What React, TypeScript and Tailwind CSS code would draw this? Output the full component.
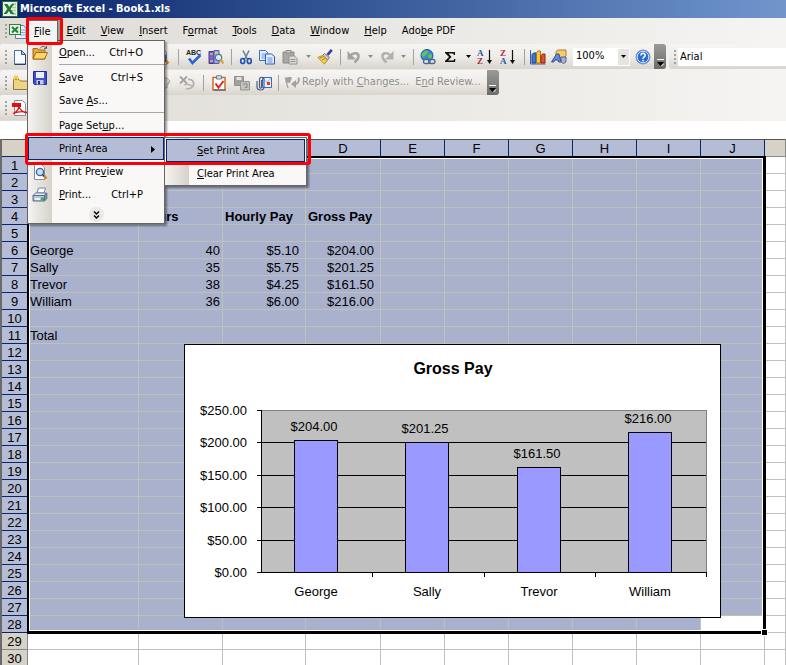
import React from 'react';

const UI = "font-['DejaVu_Sans_Condensed','DejaVu_Sans',sans-serif] text-[11px]";

type Kids = { children?: React.ReactNode };

function Svg({ children, w = 16 }: Kids & { w?: number }) {
  return (
    <svg width={w} height={16} viewBox={`0 0 ${w} 16`} fill="none" aria-hidden="true" className="shrink-0">
      {children}
    </svg>
  );
}

const ExcelIcon = () => (
  <Svg>
    <rect x=".5" y=".5" width="15" height="15" fill="#e8f3e4" stroke="#2f6b38" />
    <rect x="10" y="2" width="4" height="12" fill="#a9cfa4" />
    <path d="M10 5h4M10 8h4M10 11h4" stroke="#fff" />
    <path d="M2 3h3.500l1.800 3L9.500 3H12L8.600 8l3.600 5H8.700L6.900 10 4.800 13H1.600l3.700-5z" fill="#1f7a33" />
  </Svg>
);
const WorkbookIcon = () => (
  <Svg w={18}>
    <path d="M6.500 2.500h8l2.500 3v10H6.500z" fill="#eaf1fb" stroke="#5a7fb8" />
    <path d="M11 7h5M11 9.500h5M11 12h5" stroke="#86a8d8" />
    <rect x=".5" y="1.500" width="11" height="10" fill="#e4f2df" stroke="#3c7a40" />
    <path d="m3 4 6 5.500M9 4 3 9.500" stroke="#23803a" strokeWidth="2" />
  </Svg>
);
const NewIcon = () => (
  <Svg>
    <path d="M2.500 1.500h7l4 4v9.500h-11z" fill="#f7fbff" stroke="#4a6ea5" />
    <path d="M9.500 1.500v4h4z" fill="#b9cdea" stroke="#35568c" />
    <path d="M13.500 6v9.500h-11" stroke="#27406e" />
  </Svg>
);
const OpenIcon = () => (
  <Svg>
    <path d="M1 14V3.500h4.500L7 5h6v9z" fill="#e7a93c" stroke="#a36b12" />
    <path d="M1 14 4 7.500h11.500L12.500 14z" fill="#ffd66e" stroke="#a36b12" />
    <path d="M8 3.500C9.500.8 12.500.8 14 3M14.500.8V3.500H12" stroke="#5b5b5b" />
  </Svg>
);
const SaveIcon = () => (
  <Svg>
    <path d="M1.500 1.500h13v13h-12l-1-1z" fill="#3f4fc4" stroke="#232f8e" />
    <rect x="4" y="2" width="8" height="6" fill="#e9eefb" />
    <rect x="4.500" y="10" width="7" height="4.500" fill="#c3cbe8" />
    <rect x="6" y="11" width="2" height="3.500" fill="#232f8e" />
  </Svg>
);
const PreviewIcon = () => (
  <Svg>
    <path d="M2.500.5h7l3 3v12h-10z" fill="#fff" stroke="#7b8fb3" />
    <circle cx="8" cy="8" r="3.600" fill="#bfe0f5" stroke="#46618f" strokeWidth="1.300" />
    <path d="m11 11 3.500 3.500" stroke="#d2832a" strokeWidth="2.600" />
    <path d="m10.500 10.500 1.500 1.500" stroke="#33456b" strokeWidth="1.500" />
  </Svg>
);
const PrintIcon = () => (
  <Svg>
    <path d="M5 6 6.500 1h7L12 6z" fill="#fff" stroke="#6c87b5" />
    <path d="M1 8.500 3.500 6h11L12.500 8.500z" fill="#e8edf5" stroke="#66789a" />
    <path d="M1 8.500h11.500v5.500H1z" fill="#b7c4dc" stroke="#56698f" />
    <path d="M12.500 8.500 14.800 6v5.500L12.500 14z" fill="#8394b5" stroke="#56698f" />
    <path d="M3 12h5" stroke="#fff" strokeWidth="1.500" />
    <rect x="9" y="10.500" width="3" height="3" fill="#35b44a" />
  </Svg>
);
const SpellIcon = () => (
  <Svg w={18}>
    <text x="1" y="6" fontSize="7" fontWeight="700" fontFamily="Liberation Sans, sans-serif" fill="#222">ABC</text>
    <path d="m4 9.500 3.500 4.500L15.500 6" stroke="#2b67cf" strokeWidth="2.600" />
  </Svg>
);
const ResearchIcon = () => (
  <Svg>
    <path d="M1 2.500h5v12H1z" fill="#7b62c4" stroke="#4a3a8e" />
    <path d="M6 1.500h5v13H6z" fill="#9aa7e0" stroke="#5660a5" />
    <path d="M2 5h3M2 12h3M7 4h3" stroke="#ffe07a" />
    <circle cx="10.500" cy="8.500" r="3.200" fill="#d8edf7" stroke="#57708f" strokeWidth="1.200" />
    <path d="m12.700 11 2.800 3.500" stroke="#e0a128" strokeWidth="2.400" />
  </Svg>
);
const CutIcon = () => (
  <Svg>
    <path d="M5 1.500 9.500 10.500M11 1.500 6.500 10.500" stroke="#6f7f98" strokeWidth="1.600" />
    <ellipse cx="4.700" cy="12" rx="2" ry="2.500" stroke="#1f55b8" strokeWidth="1.700" />
    <ellipse cx="11.300" cy="12" rx="2" ry="2.500" stroke="#1f55b8" strokeWidth="1.700" />
  </Svg>
);
const CopyIcon = () => (
  <Svg>
    <path d="M.5 1.500h6l2.500 2.500v7.500H.5z" fill="#e3eeff" stroke="#3e6fc2" />
    <path d="M2.500 5h4M2.500 7h4M2.500 9h4" stroke="#6f9ae0" />
    <path d="M6.500 5h6l3 2.500v7.500h-9z" fill="#e3eeff" stroke="#2a5cb4" />
    <path d="M8.500 9h5M8.500 11h5M8.500 13h5" stroke="#5f8edc" />
  </Svg>
);
const PasteIcon = () => (
  <Svg>
    <path d="M1 3h11v11H1z" fill="#a9a8a5" stroke="#8b8a88" />
    <path d="M4 1.500h5V4H4z" fill="#cfcecb" stroke="#8b8a88" />
    <path d="M7 7h5.500l2.500 2.500V15H7z" fill="#dddcda" stroke="#93928f" />
    <path d="M8.500 10.500h5M8.500 12.500h5" stroke="#93928f" />
  </Svg>
);
const BrushIcon = () => (
  <Svg>
    <path d="m14.800.8-4.300 5" stroke="#3c3f96" strokeWidth="2.600" />
    <path d="m7.500 4.500 5 4-2 2.500-5-4.500z" fill="#c9c9d4" stroke="#77777f" />
    <path d="M5.500 6.500 10.500 11 7.500 15 .8 8.500z" fill="#f6d257" stroke="#b68a1f" />
    <path d="m3 9 4-1.500M5 11l3.500-1.500" stroke="#b68a1f" />
  </Svg>
);
const UndoIcon = () => (
  <Svg>
    <path d="M4 7C8 2.500 13 4 12.500 8c-.3 2-2 3.500-4 5.500" stroke="#a5a3a0" strokeWidth="2.600" />
    <path d="M1.500 2v8.500H10z" fill="#a5a3a0" />
  </Svg>
);
const RedoIcon = () => (
  <Svg>
    <path d="M12 7C8 2.500 3 4 3.500 8c.3 2 2 3.500 4 5.500" stroke="#b3b1ae" strokeWidth="2.600" />
    <path d="M14.500 2v8.500H6z" fill="#b3b1ae" />
  </Svg>
);
const LinkIcon = () => (
  <Svg>
    <circle cx="7" cy="6.500" r="6" fill="#3c86d8" stroke="#1d5597" />
    <path d="M3 3.500c2-2 4-2 5-1s-1 2.500-2 3.500S3 9 2 7s0-2.500 1-3.500zM9 5c2-.8 3 0 3 2s-2 3.500-3 2-1-3 0-4z" fill="#5fc557" />
    <rect x="3.500" y="10.500" width="6.500" height="4" rx="2" fill="#e8eef8" stroke="#51698f" strokeWidth="1.300" />
    <rect x="8.500" y="10.500" width="6.500" height="4" rx="2" stroke="#51698f" strokeWidth="1.300" />
  </Svg>
);
const SigmaIcon = () => (
  <Svg>
    <path d="M3 3h10v3h-1.200l-.6-1.500H6.500L9.500 8 6 11.500h5.500L12.200 10h1.200L13 13H3v-1l4-4-4-4z" fill="#111" />
  </Svg>
);
function SortIcon({ top, bottom, topColor, bottomColor }: { top: string; bottom: string; topColor: string; bottomColor: string }) {
  return (
    <Svg>
      <g fontSize="9" fontWeight="700" fontFamily="Liberation Serif, serif">
        <text x="0" y="7" fill={topColor}>{top}</text>
        <text x="0" y="15" fill={bottomColor}>{bottom}</text>
      </g>
      <path d="M12.500 1v11" stroke="#111" strokeWidth="1.200" />
      <path d="M10 11h5L12.500 15z" fill="#111" />
    </Svg>
  );
}
const ChartIcon = () => (
  <Svg>
    <path d="M.5 1v14h15" stroke="#385c9c" />
    <path d="M2 5.500 3.500 4H6v10H2z" fill="#3d78d6" stroke="#1d428a" />
    <path d="M6.500 3.500 8 2h2.500v12h-4z" fill="#f6c83e" stroke="#a97b10" />
    <path d="M11 6.500 12.500 5H15v9h-4z" fill="#e6502e" stroke="#96250e" />
  </Svg>
);
const DrawingIcon = () => (
  <Svg>
    <path d="m5 2.500 2-1.500h8v6l-2 1.500H5z" fill="#f3ce69" stroke="#a98126" />
    <path d="M10 8h5v4c0 3-5 3-5 0z" fill="#a8b3d4" stroke="#566494" />
    <path d="m.5 13 5-8H8l2 8H7.500L7 11H4l-1.200 2z" fill="#6b86cf" stroke="#37519c" />
  </Svg>
);
const HelpIcon = () => (
  <Svg>
    <circle cx="8" cy="8" r="7" fill="#2a6bd8" stroke="#6f93cf" />
    <circle cx="8" cy="8" r="5.800" stroke="#d9e6fa" />
    <path d="M6 6.500c0-3 4.200-2.800 4.200-.3C10.200 7.800 8 8 8 9.800" stroke="#fff" strokeWidth="1.600" />
    <rect x="7.200" y="10.800" width="1.600" height="1.600" fill="#fff" />
  </Svg>
);
const FolderNewIcon = () => (
  <Svg>
    <path d="M1.500 14.500v-10H7L8.500 6h7v8.500z" fill="#ecd587" stroke="#9a7a2a" />
    <path d="M4 0v6M1 3h6M2 1l4 4M6 1 2 5" stroke="#f3bf2a" />
  </Svg>
);
const NoteGrayIcon = () => (
  <Svg>
    <path d="M5 7 10 2.500l4 3.500L9.500 14z" fill="#dad8d5" stroke="#a9a7a4" />
    <path d="m10 10 4-4M6 12h6" stroke="#a9a7a4" />
  </Svg>
);
const DeleteGrayIcon = () => (
  <Svg>
    <path d="m1 1.500 7 7M8 1.500l-7 7" stroke="#a5a3a0" strokeWidth="1.800" />
    <path d="M9 4.500c5-.5 6 3 5.500 5.500s-4 4.500-7.500 3.500" stroke="#b3b1ae" strokeWidth="1.800" />
    <path d="M5 10c3-2 6 0 8 1" stroke="#b3b1ae" strokeWidth="1.400" />
  </Svg>
);
const TaskIcon = () => (
  <Svg>
    <rect x="2" y="2.500" width="12" height="12.500" fill="#fff" stroke="#c9641f" strokeWidth="1.400" />
    <path d="M3 15h11.500" stroke="#3558a5" />
    <path d="M5.500.8h5V4h-5z" fill="#d9dee8" stroke="#6e7c99" />
    <path d="m4.500 8.500 3 4 5-6.500" stroke="#e0281b" strokeWidth="2" />
  </Svg>
);
const SaveGrayIcon = () => (
  <Svg>
    <path d="M.5 1.500h9v9h-9z" fill="#a3a19e" stroke="#92908d" />
    <path d="M2.500 2h5v3h-5z" fill="#e5e3e0" />
    <path d="M6.500 6.500h9v8.500h-9z" fill="#c4c2bf" stroke="#989693" />
    <path d="M9 9h4v3.500M13 12.500h-2" stroke="#87857f" />
  </Svg>
);
const AttachIcon = () => (
  <Svg>
    <path d="M6.500 2.500h9v10h-9z" fill="#eaf3ff" stroke="#3a6bb8" />
    <path d="m7 3 4 4.500L15 3" stroke="#8fb1e2" />
    <rect x="11" y="7" width="3" height="3" fill="#e03b1f" />
    <path d="M5.500 5v7c0 1.500-2 1.500-2 0V4.500c0-3 4.500-3 4.500 0V12c0 4-7 4-7 0V6" stroke="#4c5f86" strokeWidth="1.200" />
  </Svg>
);
const ReplyIcon = () => (
  <Svg>
    <path d="M.5 2c2 1.500 4-1 7.500.5L6 8C4 7 3 8.500 2 7.500z" fill="#a3a19e" />
    <path d="m2 6 2 7" stroke="#a3a19e" strokeWidth="1.200" />
    <path d="M14.500 2.500c1 4-.5 6.500-4 6.500" stroke="#a3a19e" strokeWidth="2" />
    <path d="M12 5v8L7 9z" fill="#a3a19e" />
  </Svg>
);
const PdfIcon = () => (
  <Svg>
    <path d="M2.500.5h8l3 3v12h-11z" fill="#fff" stroke="#8a8a8a" />
    <path d="M0 3h9v4H0z" fill="#dd1111" />
    <path d="M1 13.500C5 12 7.500 8 7 5c0 4 4 8 8 7.500-4-1.500-9-1-14 1z" stroke="#dd1111" strokeWidth="1.300" />
  </Svg>
);

function Grip() {
  return (
    <span aria-hidden="true" className="flex w-[9px] shrink-0 flex-col items-center gap-[2px] pl-[2px]">
      {[0, 1, 2, 3].map((i) => (
        <span key={i} className="size-[2px] bg-[#a5a29c]" />
      ))}
    </span>
  );
}
const Sep = () => <span aria-hidden="true" className="mx-1 h-4 w-px shrink-0 bg-[#a5a29c]" />;
function Tool({ name, w = 'w-[22px]', children }: Kids & { name: string; w?: string }) {
  return (
    <button type="button" aria-label={name} className={`flex h-[22px] shrink-0 items-center justify-center ${w}`}>
      {children}
    </button>
  );
}
function Arrow({ name, w = 'w-3', gray = false }: { name: string; w?: string; gray?: boolean }) {
  return (
    <Tool name={name} w={w}>
      <svg width="5" height="3" aria-hidden="true">
        <path d="M0 0h5L2.500 3z" fill={gray ? '#8f8d89' : '#000'} />
      </svg>
    </Tool>
  );
}
function ToolbarEnd({ name }: { name: string }) {
  return (
    <button
      type="button"
      aria-label={name}
      className="flex w-3 shrink-0 items-end justify-center self-stretch rounded-r-[3px] bg-linear-to-b from-[#9a9a98] to-[#6c6c6a] pb-[3px]"
    >
      <svg width="7" height="7" aria-hidden="true">
        <path d="M0 .5h7" stroke="#fff" />
        <path d="M0 3h7L3.500 7z" fill="#000" />
        <path d="m4.500 7 2.500-2.500" stroke="#fff" />
      </svg>
    </button>
  );
}
const strip = 'flex h-[25px] items-center bg-linear-to-b from-[#f6f5f3] via-[#eeece8] to-[#d9d5cd]';

const menus: [string, string, string][] = [
  ['', 'E', 'dit'],
  ['', 'V', 'iew'],
  ['', 'I', 'nsert'],
  ['F', 'o', 'rmat'],
  ['', 'T', 'ools'],
  ['', 'D', 'ata'],
  ['', 'W', 'indow'],
  ['', 'H', 'elp'],
  ['Ado', 'b', 'e PDF'],
];
function Label({ parts }: { parts: [string, string, string] }) {
  return (
    <span className="whitespace-pre">
      {parts[0]}
      <u>{parts[1]}</u>
      {parts[2]}
    </span>
  );
}

function MenuItem({ parts, icon, keys, active, arrow }: { parts: [string, string, string]; icon?: React.ReactNode; keys?: string; active?: boolean; arrow?: boolean }) {
  return (
    <button
      type="button"
      role="menuitem"
      className={`flex h-[23px] w-full items-center border pt-px text-left ${active ? 'border-[#0a246a] bg-[#b5bdd6]' : 'border-transparent'}`}
    >
      <span className="flex w-[30px] shrink-0 pl-[3px]">{icon}</span>
      <Label parts={parts} />
      {keys && <span className="ml-auto pr-5">{keys}</span>}
      {arrow && (
        <svg width="4" height="7" className="mr-2 ml-auto" aria-hidden="true">
          <path d="M0 0v7l4-3.500z" fill="#000" />
        </svg>
      )}
    </button>
  );
}
const MenuSep = () => <div role="separator" className="mb-px ml-[31px] h-px bg-[#a6a6a6]" />;

function FileMenu() {
  return (
    <div
      role="menu"
      aria-label="File"
      className="absolute top-10 left-[27px] z-10 w-[138px] border border-[#666] bg-[#f9f8f7] bg-linear-to-r from-[#f5f4f2] from-0% via-[#d6d2ca] via-[24px] to-[#f9f8f7] to-[24px] shadow-[2px_2px_2px_rgba(0,0,0,0.4)]"
    >
      <MenuItem parts={['', 'O', 'pen...']} icon={<OpenIcon />} keys="Ctrl+O" />
      <MenuSep />
      <MenuItem parts={['', 'S', 'ave']} icon={<SaveIcon />} keys="Ctrl+S" />
      <MenuItem parts={['Save ', 'A', 's...']} />
      <MenuSep />
      <MenuItem parts={['Page Set', 'u', 'p...']} />
      <MenuItem parts={['Prin', 't', ' Area']} active arrow />
      <MenuItem parts={['Print Pre', 'v', 'iew']} icon={<PreviewIcon />} />
      <MenuItem parts={['', 'P', 'rint...']} icon={<PrintIcon />} keys="Ctrl+P" />
      <button type="button" aria-label="Show all commands" className="flex h-[17px] w-full items-center justify-center">
        <span className="flex size-[15px] items-center justify-center rounded-full bg-[#ebe9e6]">
          <svg width="7" height="8" fill="none" stroke="#000" strokeWidth="1.400" aria-hidden="true">
            <path d="m1 .5 2.500 2.500L6 .5M1 4.500 3.500 7 6 4.500" />
          </svg>
        </span>
      </button>
    </div>
  );
}
function PrintAreaMenu() {
  return (
    <div
      role="menu"
      aria-label="Print Area"
      className="absolute top-[137px] left-[164px] z-20 w-[143px] border border-[#666] bg-[#f9f8f7] bg-linear-to-r from-[#f5f4f2] from-0% via-[#d6d2ca] via-[24px] to-[#f9f8f7] to-[24px] px-px pt-px shadow-[2px_2px_2px_rgba(0,0,0,0.4)]"
    >
      <MenuItem parts={['', 'S', 'et Print Area']} active />
      <MenuItem parts={['', 'C', 'lear Print Area']} />
    </div>
  );
}

const columns = ['A', 'B', 'C', 'D', 'E', 'F', 'G', 'H', 'I', 'J', 'K'];
// Letters under the open menus, and in the cut-off last column, are not painted.
const shownLetters = 'DEFGHIJ';
const cells: Record<number, string[]> = {
  4: ['', 'Hours', 'Hourly Pay', 'Gross Pay'],
  6: ['George', '40', '$5.10', '$204.00'],
  7: ['Sally', '35', '$5.75', '$201.25'],
  8: ['Trevor', '38', '$4.25', '$161.50'],
  9: ['William', '36', '$6.00', '$216.00'],
  11: ['Total'],
};

function Sheet() {
  return (
    <table className="w-full table-fixed border-separate border-spacing-0 border-l-2 border-[#6b6b6b] bg-white text-[13px] leading-[15px]">
      <colgroup>
        <col className="w-[26px]" />
        <col className="w-[111px]" />
        <col className="w-[84px]" />
        <col className="w-[83px]" />
        <col className="w-[75px]" />
        <col className="w-16" />
        <col className="w-16" />
        <col className="w-16" />
        <col className="w-16" />
        <col className="w-16" />
        <col className="w-16" />
        <col />
      </colgroup>
      <thead>
        <tr className="h-[18px]">
          <th className="border-t border-r border-b border-t-[#555] border-r-[#0a246a] border-b-[#0a246a] bg-[#d6d2c8] p-0" />
          {columns.map((c) => (
            <th
              key={c}
              scope="col"
              aria-label={c}
              className={`border-t border-r border-b border-t-[#555] p-0 font-normal ${c === 'K' ? 'border-r-[#888] border-b-[#888] bg-[#d6d2c8]' : 'border-r-[#0a246a] border-b-[#0a246a] bg-[#b5bdd6]'}`}
            >
              {shownLetters.includes(c) ? c : ''}
            </th>
          ))}
        </tr>
      </thead>
      <tbody>
        {Array.from({ length: 30 }, (_, i) => i + 1).map((row) => (
          <tr key={row} className="h-[17px]">
            <th
              scope="row"
              className={`border-r border-b px-0 pt-px pb-0 font-normal ${row <= 28 ? 'border-[#0a246a] bg-[#b5bdd6]' : 'border-[#888] bg-[#d6d2c8]'}`}
            >
              {row}
            </th>
            {columns.map((c, ci) => {
              const inside = row <= 28 && ci < 10;
              const active = row === 28 && c === 'J';
              const look = inside ? (active ? 'border-[#c0c0c0] bg-white' : 'border-[#bdc2bb] bg-[#a9b1cd]') : 'border-[#c0c0c0]';
              const align = row === 4 ? 'text-left font-bold' : ci === 0 ? 'text-left' : 'text-right';
              const pad = (ci === 2 || ci === 3) && row !== 4 ? 'pr-[6px] pl-[2px]' : 'px-[2px]';
              return (
                <td key={c} className={`overflow-hidden border-r border-b pt-px pb-0 whitespace-nowrap ${look} ${align} ${pad}`}>
                  {cells[row]?.[ci] ?? ''}
                </td>
              );
            })}
          </tr>
        ))}
      </tbody>
    </table>
  );
}

const bars = [
  { name: 'George', label: '$204.00', value: 204, x: 110 },
  { name: 'Sally', label: '$201.25', value: 201.25, x: 221 },
  { name: 'Trevor', label: '$161.50', value: 161.5, x: 333 },
  { name: 'William', label: '$216.00', value: 216, x: 444 },
];
const ticks = [
  { y: 66, label: '$250.00' },
  { y: 98, label: '$200.00' },
  { y: 131, label: '$150.00' },
  { y: 163, label: '$100.00' },
  { y: 196, label: '$50.00' },
  { y: 228, label: '$0.00' },
];

function GrossPayChart() {
  return (
    <svg
      role="img"
      aria-label="Gross Pay"
      width="537"
      height="274"
      className="absolute top-[205px] left-[184px] font-['Liberation_Sans',Arial,sans-serif] text-[13px]"
      shapeRendering="crispEdges"
    >
      <rect x=".5" y=".5" width="536" height="273" fill="#fff" stroke="#000" />
      <text x="269" y="30" textAnchor="middle" fontSize="16" fontWeight="700">Gross Pay</text>
      <rect x="77" y="66" width="445" height="162" fill="#c0c0c0" />
      {ticks.map((t, i) => (
        <g key={t.label}>
          <path d={`M73 ${t.y + 0.5}H${i === 0 ? 77 : 522}`} stroke="#000" />
          <text x="63" y={t.y + 5} textAnchor="end">{t.label}</text>
        </g>
      ))}
      <path d="M78 66.500h444.500V228" stroke="#808080" fill="none" />
      {bars.map((b) => {
        const top = Math.round(228 - (b.value / 250) * 162) + 0.5;
        return (
          <g key={b.name}>
            <rect x={b.x + 0.5} y={top} width="43" height={228.5 - top} fill="#9999ff" stroke="#000" />
            <text x={b.x + 20} y={top - 10} textAnchor="middle">{b.label}</text>
            <text x={b.x + 22} y="252" textAnchor="middle">{b.name}</text>
          </g>
        );
      })}
      <path d="M77.500 66v162M188.500 228v5M300.500 228v5M411.500 228v5M522.500 228v5" stroke="#000" />
    </svg>
  );
}

export default function App() {
  return (
    <div className={`relative h-screen overflow-hidden bg-white text-black ${UI}`}>
      <header className="flex h-[18px] items-center gap-[2px] bg-linear-to-r from-[#0a246a] to-[#7096cc] pl-[2px] text-white">
        <ExcelIcon />
        <h1 className="pt-px font-bold whitespace-nowrap">Microsoft Excel - Book1.xls</h1>
      </header>

      <div className="h-[103px] bg-linear-to-r from-[#dfdcd6] to-[#f5f4f2]">
        <nav aria-label="Menu bar" className="flex h-[26px] items-center">
          <span className="flex w-[27px] shrink-0 items-center">
            <Grip />
            <WorkbookIcon />
          </span>
          <button type="button" className="relative z-20 mt-[2px] h-[23px] self-start border border-b-0 border-[#666] bg-[#f4f3f1] px-[6px] shadow-[2px_0_1px_rgba(0,0,0,0.3)]">
            <Label parts={['', 'F', 'ile']} />
          </button>
          <span className="flex pl-px">
            {menus.map((m) => (
              <button key={m[1] + m[2]} type="button" className="pr-[7px] pl-2">
                <Label parts={m} />
              </button>
            ))}
          </span>
        </nav>

        <div className="flex gap-[3px]">
          <div role="toolbar" aria-label="Standard" className={`${strip} shrink-0 rounded-[3px]`}>
            <Grip />
            <Tool name="New"><NewIcon /></Tool>
            <Tool name="Open"><OpenIcon /></Tool>
            <Tool name="Save"><SaveIcon /></Tool>
            <Tool name="E-mail"><AttachIcon /></Tool>
            <Sep />
            <Tool name="Print"><PrintIcon /></Tool>
            <Tool name="Permission"><NewIcon /></Tool>
            <Tool name="Print Preview" w="w-6"><PreviewIcon /></Tool>
            <Sep />
            <Tool name="Spelling"><SpellIcon /></Tool>
            <Tool name="Research"><ResearchIcon /></Tool>
            <Sep />
            <Tool name="Cut" w="w-5"><CutIcon /></Tool>
            <Tool name="Copy"><CopyIcon /></Tool>
            <Tool name="Paste" w="w-6"><PasteIcon /></Tool>
            <Arrow name="Paste options" gray />
            <Tool name="Format Painter"><BrushIcon /></Tool>
            <Sep />
            <Tool name="Undo" w="w-[18px]"><UndoIcon /></Tool>
            <Arrow name="Undo list" w="w-[14px]" gray />
            <Tool name="Redo" w="w-5"><RedoIcon /></Tool>
            <Arrow name="Redo list" gray />
            <Sep />
            <Tool name="Insert Hyperlink" w="w-5"><LinkIcon /></Tool>
            <Tool name="AutoSum" w="w-6"><SigmaIcon /></Tool>
            <Arrow name="AutoSum functions" />
            <Tool name="Sort Ascending"><SortIcon top="A" bottom="Z" topColor="#2b57a8" bottomColor="#a8323a" /></Tool>
            <Tool name="Sort Descending" w="w-6"><SortIcon top="Z" bottom="A" topColor="#a8323a" bottomColor="#2b57a8" /></Tool>
            <Sep />
            <Tool name="Chart Wizard" w="w-[18px]"><ChartIcon /></Tool>
            <Tool name="Drawing" w="w-6"><DrawingIcon /></Tool>
            <span className="relative mx-[2px] flex">
              <select aria-label="Zoom" className="h-[18px] w-[57px] appearance-none bg-white pl-[3px]">
                <option>100%</option>
              </select>
              <span className="pointer-events-none absolute inset-y-px right-px flex w-[11px] items-center justify-center bg-[#e6e4e0]">
                <svg width="5" height="3" aria-hidden="true"><path d="M0 0h5L2.500 3z" fill="#000" /></svg>
              </span>
            </span>
            <Tool name="Help"><HelpIcon /></Tool>
            <ToolbarEnd name="Standard toolbar options" />
          </div>
          <div role="toolbar" aria-label="Formatting" className={`${strip} min-w-0 flex-1 rounded-l-[3px]`}>
            <Grip />
            <input aria-label="Font" defaultValue="Arial" className="h-[18px] min-w-0 flex-1 bg-white px-[2px]" />
          </div>
        </div>

        <div role="toolbar" aria-label="Reviewing" className={`${strip} mt-px w-fit rounded-[3px]`}>
          <Grip />
          <Tool name="New Folder"><FolderNewIcon /></Tool>
          <span className="w-[122px]" />
          <Tool name="Show Comment"><NoteGrayIcon /></Tool>
          <Tool name="Delete Comment" w="w-6"><DeleteGrayIcon /></Tool>
          <Sep />
          <Tool name="Create Task"><TaskIcon /></Tool>
          <Tool name="Update File" w="w-6"><SaveGrayIcon /></Tool>
          <Tool name="Send as Attachment" w="w-5"><AttachIcon /></Tool>
          <Sep />
          <button type="button" disabled className="flex items-center gap-[2px] pl-px whitespace-nowrap text-[#8f8d89]">
            <ReplyIcon />
            <Label parts={['Reply with ', 'C', 'hanges...']} />
          </button>
          <button type="button" disabled className="px-[6px] whitespace-nowrap text-[#8f8d89]">
            <Label parts={['E', 'n', 'd Review...']} />
          </button>
          <ToolbarEnd name="Reviewing toolbar options" />
        </div>

        <div role="toolbar" aria-label="PDF" className={`${strip} w-fit rounded-[3px]`}>
          <Grip />
          <Tool name="Convert to PDF"><PdfIcon /></Tool>
          <Tool name="Convert and e-mail"><PdfIcon /></Tool>
        </div>
      </div>

      <input aria-label="Formula" className="block h-[18px] w-full bg-white" />

      <main className="relative font-['Liberation_Sans',Arial,sans-serif]">
        <Sheet />
        <div aria-hidden="true" className="pointer-events-none absolute top-[17px] left-[27px] h-[478px] w-[739px] border-t-2 border-r-3 border-b-3 border-l-2 border-black">
          <div className="size-full border border-white" />
        </div>
        <span aria-hidden="true" className="absolute top-[491px] left-[762px] size-[5px] bg-black outline outline-white" />
        <GrossPayChart />
      </main>

      <FileMenu />
      <PrintAreaMenu />
      <div aria-hidden="true" className="pointer-events-none absolute top-[17px] left-[26px] z-30 h-7 w-[37px] rounded-[3px] border-3 border-[#fb0007]" />
      <div aria-hidden="true" className="pointer-events-none absolute top-[133px] left-[25px] z-30 h-8 w-[286px] rounded-[3px] border-3 border-[#fb0007]" />
    </div>
  );
}
